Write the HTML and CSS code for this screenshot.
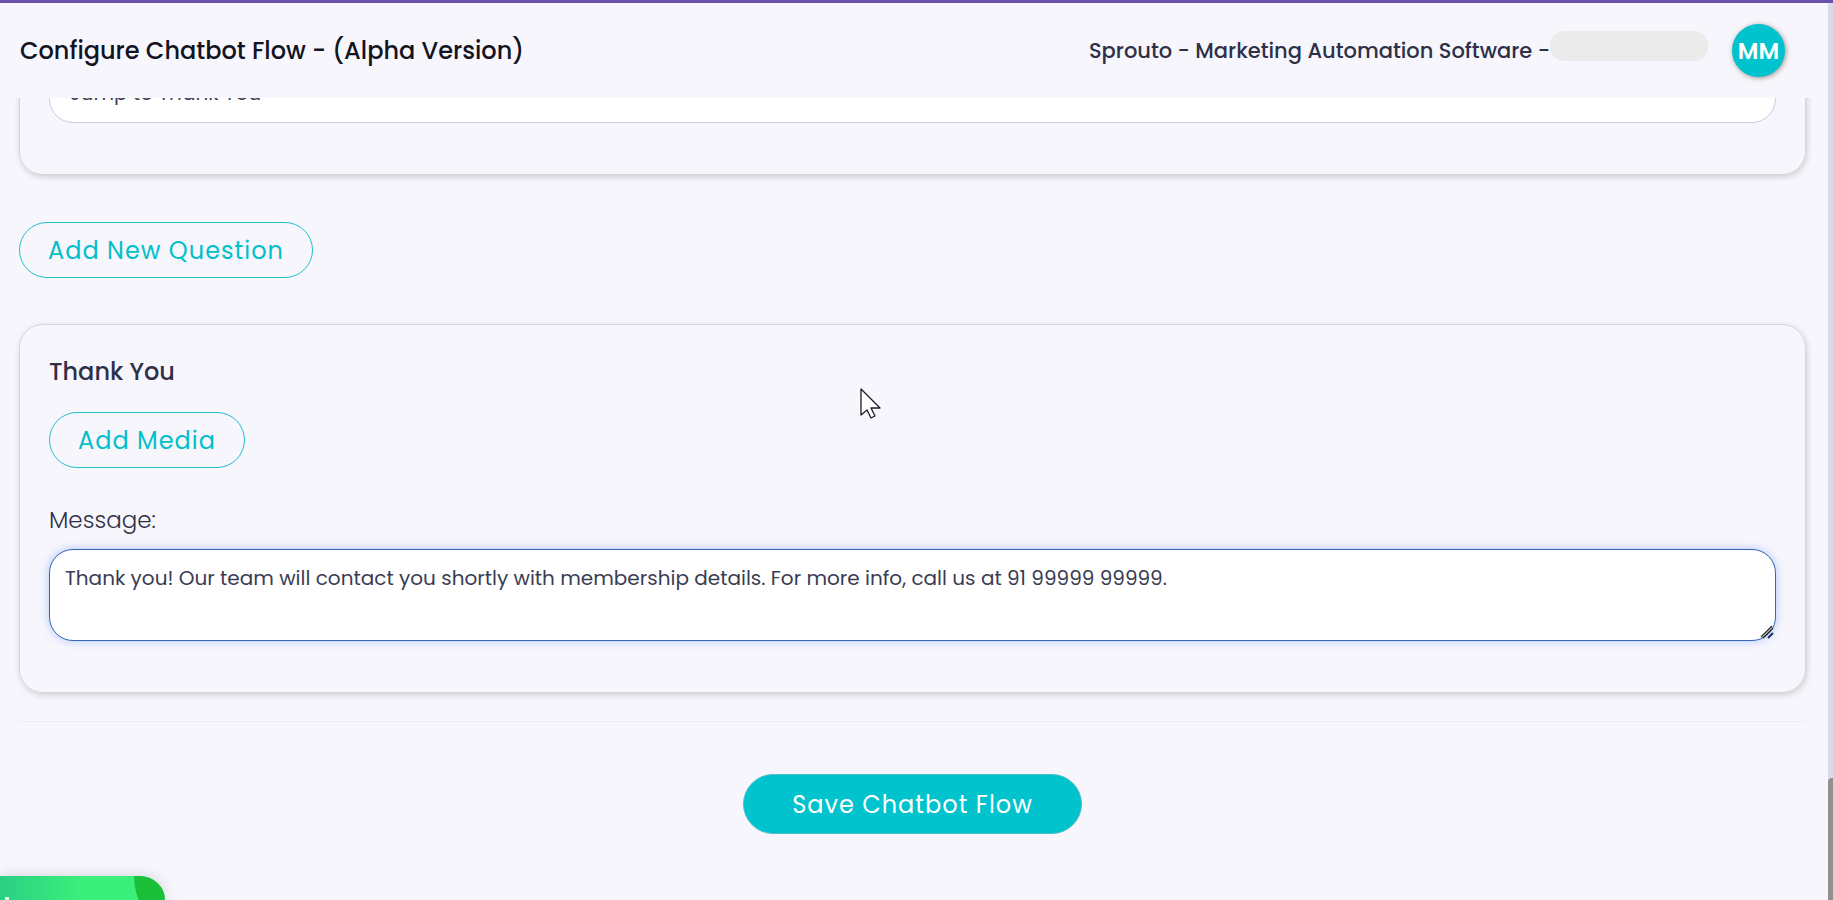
FILE: index.html
```html
<!DOCTYPE html>
<html lang="en">
<head>
<meta charset="utf-8">
<meta name="viewport" content="width=device-width, initial-scale=1">
<title>Configure Chatbot Flow</title>
<link rel="stylesheet" href="styles.css">
</head>
<body>
<div class="app">
  <header class="header">
    <h1 class="header-title">Configure Chatbot Flow - (Alpha Version)</h1>
    <div class="account">
      <span class="account-name">Sprouto - Marketing Automation Software -</span>
      <span class="account-mask"></span>
      <button class="avatar" type="button">MM</button>
    </div>
  </header>
  <main class="content">
    <section class="card card-scrolled">
      <select class="jump" aria-label="Next step">
        <option>Jump to Thank You</option>
      </select>
    </section>
    <button class="btn btn-outline" type="button">Add New Question</button>
    <section class="card card-thanks">
      <h2 class="card-title">Thank You</h2>
      <button class="btn btn-outline" type="button">Add Media</button>
      <label class="label" for="message">Message:</label>
      <div class="field">
        <textarea class="message" id="message">Thank you! Our team will contact you shortly with membership details. For more info, call us at 91 99999 99999.</textarea>
        <svg class="grip" viewBox="0 0 14 14" aria-hidden="true"><path d="M1 12 12 1M3 13 13 3" fill="none" stroke="#222" stroke-width="1.300"/><path d="M8 13l5-5" stroke="#16305f" stroke-width="2"/></svg>
      </div>
    </section>
    <hr class="divider">
    <button class="btn btn-save" type="button">Save Chatbot Flow</button>
  </main>
</div>
<div class="chat-widget"><i class="chat-spark"></i><i class="chat-edge"></i></div>
<div class="scrollbar"><div class="scrollbar-thumb"></div></div>
<svg class="cursor" viewBox="0 0 22 32" aria-hidden="true"><path d="M1 1v26l6-5 4 8 4-2-4-8h9z" fill="#fff" stroke="#1c1c28" stroke-width="1.300" stroke-linejoin="round"/></svg>
</body>
</html>
```
FILE: styles.css
```css
* { box-sizing: border-box; }

body {
  margin: 0;
  background: #f7f6fc;
  color: #2e3048;
  font-family: Poppins, Inter, "Open Sans", sans-serif;
}

button, select, textarea { font: inherit; color: inherit; }

.app {
  display: flex;
  flex-direction: column;
  height: 100vh;
  overflow: hidden;
}

.header {
  display: flex;
  flex: none;
  align-items: center;
  justify-content: space-between;
  height: 98px;
  padding: 0 48px 0 20px;
  border-top: 3px solid #6b50ac;
  background: #f7f6fc;
  z-index: 1;
}

.header-title {
  margin: 0;
  color: #12141f;
  font-size: 24px;
  font-weight: 500;
}

.account { display: flex; align-items: center; }
.account-name { font-size: 21px; font-weight: 500; }

.account-mask {
  width: 158px;
  height: 30px;
  margin: 0 24px 10px 0;
  border-radius: 14px;
  background: #ebebeb;
}

.avatar {
  width: 53px;
  height: 53px;
  padding: 0;
  border: 0;
  border-radius: 50%;
  background: #00c3ce;
  box-shadow: 1px 1px 5px rgba(70, 40, 40, .5);
  color: #fff;
  font-size: 23px;
  font-weight: 600;
}

.content {
  display: flex;
  flex: 1;
  flex-direction: column;
  align-items: flex-start;
  min-height: 0;
  padding: 0 27px 0 19px;
}

.card {
  display: flex;
  flex-direction: column;
  align-items: flex-start;
  align-self: stretch;
  padding: 32px 29px 51px;
  border: 1px solid #d5d5dc;
  border-radius: 24px;
  box-shadow: 1px 2px 6px rgba(0, 0, 0, .17);
}

.card-scrolled { margin: -68px 0 47px; }
.card-thanks { margin: 46px 0 28px; }

.jump, .message {
  width: 100%;
  border-radius: 24px;
  background: #fff;
  color: #3a3c54;
  font-size: 20px;
  font-weight: 400;
}

.jump {
  height: 60px;
  padding: 0 20px;
  border: 1px solid #c6cddc;
  appearance: none;
}

.btn {
  height: 56px;
  padding: 0 28px;
  border-radius: 28px;
  font-size: 24px;
  letter-spacing: 1px;
}

.btn-outline {
  border: 1px solid #1fbfca;
  background: transparent;
  color: #00c0cc;
}

.card-title {
  margin: 0 0 25px;
  font-size: 24px;
  font-weight: 500;
  line-height: 30px;
}

.label {
  margin: 37px 0 14px;
  font-size: 23px;
  font-weight: 300;
  line-height: 30px;
}

.field { position: relative; align-self: stretch; }

.message {
  display: block;
  height: 92px;
  padding: 13px 15px;
  border: 1px solid #3565b5;
  outline: 0;
  box-shadow: 0 0 10px rgba(70, 130, 255, .4);
  line-height: 30px;
  resize: none;
}

.grip {
  position: absolute;
  right: 2px;
  bottom: 2px;
  width: 14px;
  height: 14px;
}

.divider {
  align-self: stretch;
  margin: 0 0 52px;
  border: 0;
  border-top: 1px solid #ededf3;
}

.btn-save {
  align-self: center;
  height: 60px;
  padding: 0 48px;
  border: 1px solid #4fbdc8;
  border-radius: 30px;
  background: #00c3ce;
  color: #fff;
}

.chat-widget {
  position: fixed;
  left: 0;
  bottom: 0;
  width: 165px;
  height: 24px;
  border-top-right-radius: 32px 30px;
  background: linear-gradient(90deg, #2bd083, #3af07b 50%);
  box-shadow: 0 0 16px rgba(0, 0, 0, .14);
  overflow: hidden;
}

.chat-edge {
  position: absolute;
  top: 0;
  right: 0;
  width: 31px;
  height: 40px;
  border-bottom-left-radius: 24px 40px;
  background: #1ac038;
}

.chat-spark {
  position: absolute;
  left: 5px;
  bottom: 0;
  width: 4px;
  height: 3px;
  background: #d9fbe6;
}

.scrollbar {
  position: fixed;
  top: 3px;
  right: 0;
  bottom: 0;
  width: 5px;
  background: #d9dbea;
  z-index: 2;
}

.scrollbar-thumb {
  position: absolute;
  right: 0;
  bottom: 0;
  width: 5px;
  height: 122px;
  border-top-left-radius: 4px;
  background: #909090;
}

.cursor {
  position: fixed;
  left: 860px;
  top: 388px;
  width: 22px;
  height: 32px;
}
```
